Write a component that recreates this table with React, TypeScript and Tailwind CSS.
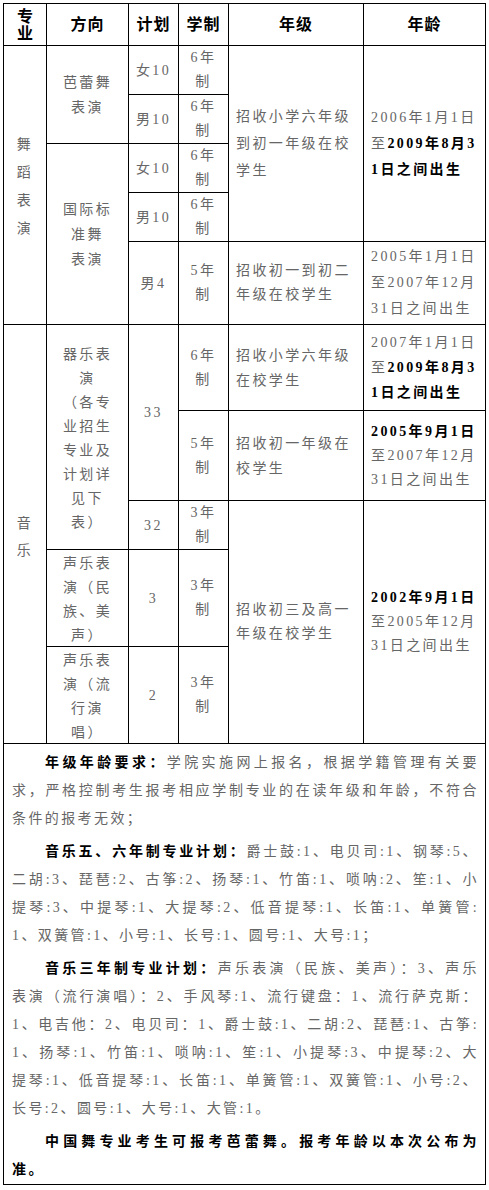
import type { ReactNode } from "react";

// 粗体部分（日期、段落标题）
function B({ children }: { children: ReactNode }) {
  return <span className="font-bold text-black">{children}</span>;
}

function Cell({ className, children }: { className: string; children: ReactNode }) {
  return (
    <div className={`flex flex-col justify-center bg-white ${className}`}>
      {children}
    </div>
  );
}

// 说明文字，每段按原图换行
const notes: ReactNode[][] = [
  [
    <>
      <B>年级年龄要求：</B>学院实施网上报名，根据学籍管理有关要
    </>,
    "求，严格控制考生报考相应学制专业的在读年级和年龄，不符合",
    "条件的报考无效；",
  ],
  [
    <>
      <B>音乐五、六年制专业计划：</B>爵士鼓:1、电贝司:1、钢琴:5、
    </>,
    "二胡:3、琵琶:2、古筝:2、扬琴:1、竹笛:1、唢呐:2、笙:1、小",
    "提琴:3、中提琴:1、大提琴:2、低音提琴:1、长笛:1、单簧管:",
    "1、双簧管:1、小号:1、长号:1、圆号:1、大号:1；",
  ],
  [
    <>
      <B>音乐三年制专业计划：</B>声乐表演（民族、美声）：3、声乐
    </>,
    "表演（流行演唱）：2、手风琴:1、流行键盘：1、流行萨克斯：",
    "1、电吉他：2、电贝司：1、爵士鼓:1、二胡:2、琵琶:1、古筝:",
    "1、扬琴:1、竹笛:1、唢呐:1、笙:1、小提琴:3、中提琴:2、大",
    "提琴:1、低音提琴:1、长笛:1、单簧管:1、双簧管:1、小号:2、",
    "长号:2、圆号:1、大号:1、大管:1。",
  ],
  [
    <B>中国舞专业考生可报考芭蕾舞。报考年龄以本次公布为</B>,
    <B>准。</B>,
  ],
];

function Lines({ lines }: { lines: ReactNode[] }) {
  return (
    <>
      {lines.map((l, i) => (
        <div key={i}>{l}</div>
      ))}
    </>
  );
}

export default function App() {
  return (
    <div className="min-h-[1190px] bg-white pl-[3px] pt-[3px] font-['Liberation_Serif','Noto_Sans_CJK_SC',serif] text-[14px] text-[#666] tracking-[2.4px]">
      <div className="grid w-fit grid-cols-[42px_81px_49px_49px_134px_121px] grid-rows-[41px_48px_48px_48px_48px_82px_85px_89px_48px_96px_96px_auto] gap-px border border-black bg-black">
        {/* 表头 */}
        <Cell className="col-start-1 row-start-1 items-center text-[16px] font-bold leading-[17px] tracking-normal text-black">
          <span>专</span>
          <span>业</span>
        </Cell>
        <Cell className="col-start-2 row-start-1 items-center text-[16px] font-bold tracking-[1px] text-black">方向</Cell>
        <Cell className="col-start-3 row-start-1 items-center text-[16px] font-bold tracking-[1px] text-black">计划</Cell>
        <Cell className="col-start-4 row-start-1 items-center text-[16px] font-bold tracking-[1px] text-black">学制</Cell>
        <Cell className="col-start-5 row-start-1 items-center text-[16px] font-bold tracking-[1px] text-black">年级</Cell>
        <Cell className="col-start-6 row-start-1 items-center text-[16px] font-bold tracking-[1px] text-black">年龄</Cell>

        {/* 专业 */}
        <Cell className="col-start-1 row-start-2 row-span-5 items-center pt-[3px] leading-[28px]">
          {"舞蹈表演".split("").map((c) => (
            <span key={c}>{c}</span>
          ))}
        </Cell>
        <Cell className="col-start-1 row-start-7 row-span-5 items-center pt-[6px] leading-[27px]">
          <span>音</span>
          <span>乐</span>
        </Cell>

        {/* 方向 */}
        <Cell className="col-start-2 row-start-2 row-span-2 items-center leading-[25px]">
          <Lines lines={["芭蕾舞", "表演"]} />
        </Cell>
        <Cell className="col-start-2 row-start-4 row-span-3 items-center leading-[25px]">
          <Lines lines={["国际标", "准舞", "表演"]} />
        </Cell>
        <Cell className="col-start-2 row-start-7 row-span-3 items-center pt-[3px] leading-[24px]">
          <Lines lines={["器乐表", "演", "（各专", "业招生", "专业及", "计划详", "见下", "表）"]} />
        </Cell>
        <Cell className="col-start-2 row-start-10 items-center pt-[3px] leading-[24px]">
          <Lines lines={["声乐表", "演（民", "族、美", "声）"]} />
        </Cell>
        <Cell className="col-start-2 row-start-11 items-center pt-[3px] leading-[24px]">
          <Lines lines={["声乐表", "演（流", "行演", "唱）"]} />
        </Cell>

        {/* 计划 */}
        <Cell className="col-start-3 row-start-2 items-center">女10</Cell>
        <Cell className="col-start-3 row-start-3 items-center">男10</Cell>
        <Cell className="col-start-3 row-start-4 items-center">女10</Cell>
        <Cell className="col-start-3 row-start-5 items-center">男10</Cell>
        <Cell className="col-start-3 row-start-6 items-center">男4</Cell>
        <Cell className="col-start-3 row-start-7 row-span-2 items-center">33</Cell>
        <Cell className="col-start-3 row-start-9 items-center">32</Cell>
        <Cell className="col-start-3 row-start-10 items-center">3</Cell>
        <Cell className="col-start-3 row-start-11 items-center">2</Cell>

        {/* 学制 */}
        <Cell className="col-start-4 row-start-2 items-center leading-[24px]">
          <Lines lines={["6年", "制"]} />
        </Cell>
        <Cell className="col-start-4 row-start-3 items-center leading-[24px]">
          <Lines lines={["6年", "制"]} />
        </Cell>
        <Cell className="col-start-4 row-start-4 items-center leading-[24px]">
          <Lines lines={["6年", "制"]} />
        </Cell>
        <Cell className="col-start-4 row-start-5 items-center leading-[24px]">
          <Lines lines={["6年", "制"]} />
        </Cell>
        <Cell className="col-start-4 row-start-6 items-center leading-[24px]">
          <Lines lines={["5年", "制"]} />
        </Cell>
        <Cell className="col-start-4 row-start-7 items-center leading-[24px]">
          <Lines lines={["6年", "制"]} />
        </Cell>
        <Cell className="col-start-4 row-start-8 items-center leading-[24px]">
          <Lines lines={["5年", "制"]} />
        </Cell>
        <Cell className="col-start-4 row-start-9 items-center leading-[24px]">
          <Lines lines={["3年", "制"]} />
        </Cell>
        <Cell className="col-start-4 row-start-10 items-center leading-[24px]">
          <Lines lines={["3年", "制"]} />
        </Cell>
        <Cell className="col-start-4 row-start-11 items-center leading-[24px]">
          <Lines lines={["3年", "制"]} />
        </Cell>

        {/* 年级 */}
        <Cell className="col-start-5 row-start-2 row-span-4 items-start px-[7px] leading-[27px]">
          <p>招收小学六年级到初一年级在校学生</p>
        </Cell>
        <Cell className="col-start-5 row-start-6 items-start px-[7px] leading-[24px]">
          <p>招收初一到初二年级在校学生</p>
        </Cell>
        <Cell className="col-start-5 row-start-7 items-start px-[7px] leading-[25px]">
          <p>招收小学六年级在校学生</p>
        </Cell>
        <Cell className="col-start-5 row-start-8 items-start px-[7px] leading-[25px]">
          <p>招收初一年级在校学生</p>
        </Cell>
        <Cell className="col-start-5 row-start-9 row-span-3 items-start px-[7px] leading-[24px]">
          <p>招收初三及高一年级在校学生</p>
        </Cell>

        {/* 年龄 */}
        <Cell className="col-start-6 row-start-2 row-span-4 items-start px-[7px] leading-[26px]">
          <Lines
            lines={[
              "2006年1月1日",
              <>
                至<B>2009年8月3</B>
              </>,
              <B>1日之间出生</B>,
            ]}
          />
        </Cell>
        <Cell className="col-start-6 row-start-6 items-start px-[7px] leading-[26px]">
          <Lines lines={["2005年1月1日", "至2007年12月", "31日之间出生"]} />
        </Cell>
        <Cell className="col-start-6 row-start-7 items-start px-[7px] leading-[25px]">
          <Lines
            lines={[
              "2007年1月1日",
              <>
                至<B>2009年8月3</B>
              </>,
              <B>1日之间出生</B>,
            ]}
          />
        </Cell>
        <Cell className="col-start-6 row-start-8 items-start px-[7px] leading-[24px]">
          <Lines lines={[<B>2005年9月1日</B>, "至2007年12月", "31日之间出生"]} />
        </Cell>
        <Cell className="col-start-6 row-start-9 row-span-3 items-start px-[7px] leading-[24px]">
          <Lines lines={[<B>2002年9月1日</B>, "至2005年12月", "31日之间出生"]} />
        </Cell>

        {/* 说明 */}
        <div className="col-span-6 row-start-12 bg-white pb-0 pl-[8px] pr-[6px] pt-[5px] leading-[28px]">
          {notes.map((para, p) => (
            <div key={p} className={p > 0 ? "mt-[5px]" : ""}>
              {para.map((line, i) => {
                const last = i === para.length - 1;
                return (
                  <div
                    key={i}
                    className={`${i === 0 ? "indent-[33px]" : ""} ${
                      last ? "text-left" : "text-justify [text-align-last:justify]"
                    }`}
                  >
                    {line}
                  </div>
                );
              })}
            </div>
          ))}
        </div>
      </div>
    </div>
  );
}
